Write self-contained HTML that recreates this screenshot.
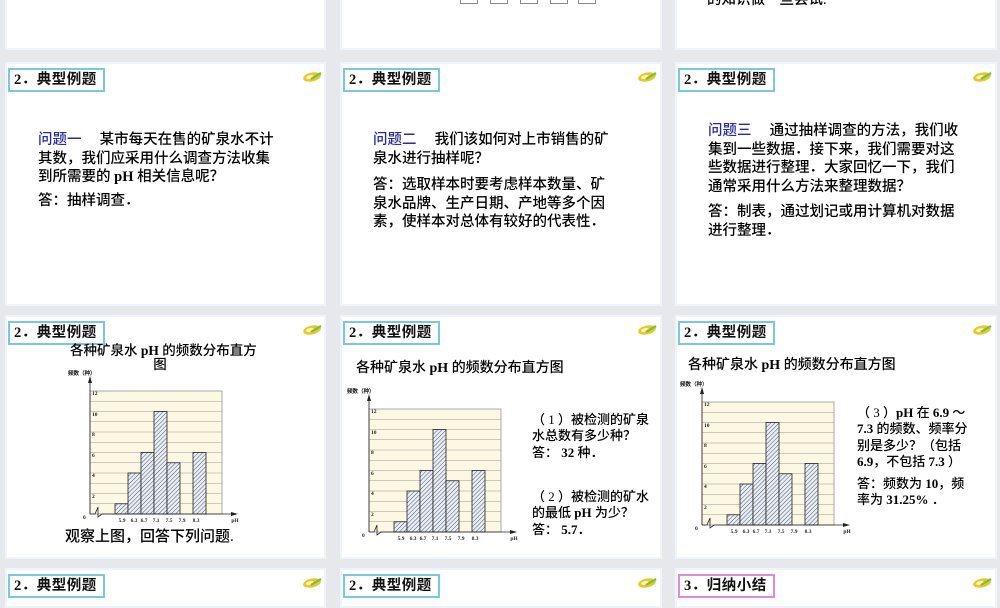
<!DOCTYPE html>
<html><head><meta charset="utf-8">
<style>
*{margin:0;padding:0;box-sizing:border-box}
body{width:1000px;height:600px;overflow:hidden;background:#e7e8ec;position:relative;font-family:"Liberation Serif","Noto Sans CJK SC",sans-serif;}
.s{position:absolute;background:#fff;border:2px solid #edf4fb;}
.t{position:absolute;border:2px solid #78c8e0;font-size:14.5px;font-weight:bold;color:#111;padding:0 6px 0 4px;height:24px;line-height:20px;background:#fff;white-space:nowrap;letter-spacing:0.5px}
.t.p{border-color:#e08ad8}
.ic{position:absolute;width:22px;height:12px}
.tx{position:absolute;font-size:14.5px;line-height:18.7px;color:#000;font-weight:500;font-family:"Liberation Serif","Noto Sans CJK SC",sans-serif;white-space:nowrap}
.b{color:#2a2aa0}
.q{position:absolute;font-size:13px;line-height:16.3px;color:#000;font-weight:500;white-space:nowrap}
.ch{position:absolute}
</style></head><body>

<div class="s" style="left:5px;top:-10px;width:321px;height:60px"></div>
<div class="s" style="left:340px;top:-10px;width:322px;height:60px">
  <div style="position:absolute;left:118px;top:8px;width:18px;height:4px;border:1px solid #888;border-top:none"></div>
  <div style="position:absolute;left:148px;top:8px;width:18px;height:4px;border:1px solid #888;border-top:none"></div>
  <div style="position:absolute;left:178px;top:8px;width:18px;height:4px;border:1px solid #888;border-top:none"></div>
  <div style="position:absolute;left:208px;top:8px;width:18px;height:4px;border:1px solid #888;border-top:none"></div>
  <div style="position:absolute;left:236px;top:8px;width:18px;height:4px;border:1px solid #888;border-top:none"></div>
</div>
<div class="s" style="left:675px;top:-10px;width:322px;height:60px">
  <div class="tx" style="left:30px;top:-1px">的知识做一些尝试.</div>
</div>

<div class="s" style="left:5px;top:62px;width:321px;height:244px"></div>
<div class="s" style="left:340px;top:62px;width:322px;height:244px"></div>
<div class="s" style="left:675px;top:62px;width:322px;height:244px"></div>

<div class="s" style="left:5px;top:315px;width:321px;height:244px"></div>
<div class="s" style="left:340px;top:315px;width:322px;height:244px"></div>
<div class="s" style="left:675px;top:315px;width:322px;height:244px"></div>

<div class="s" style="left:5px;top:568px;width:321px;height:40px"></div>
<div class="s" style="left:340px;top:568px;width:322px;height:40px"></div>
<div class="s" style="left:675px;top:568px;width:322px;height:40px"></div>

<div class="t" style="left:8px;top:68px">2．典型例题</div>
<div class="t" style="left:343px;top:68px">2．典型例题</div>
<div class="t" style="left:678px;top:68px">2．典型例题</div>
<div class="t" style="left:8px;top:321px">2．典型例题</div>
<div class="t" style="left:343px;top:321px">2．典型例题</div>
<div class="t" style="left:678px;top:321px">2．典型例题</div>
<div class="t" style="left:8px;top:574px">2．典型例题</div>
<div class="t" style="left:343px;top:574px">2．典型例题</div>
<div class="t p" style="left:678px;top:574px">3．归纳小结</div>

<svg width="0" height="0" style="position:absolute"><defs>
<g id="leaf"><ellipse cx="10" cy="6" rx="9" ry="4.5" fill="#e8c830" transform="rotate(-12 10 6)"/><ellipse cx="8" cy="6" rx="4" ry="1.8" fill="#fff6b0" transform="rotate(-12 8 6)"/><path d="M9 8 L19 2" stroke="#7cc040" stroke-width="2.2"/></g>
<pattern id="h" width="3" height="3" patternUnits="userSpaceOnUse" patternTransform="rotate(45)"><rect width="3" height="3" fill="#e8eef8"/><line x1="0" y1="0" x2="0" y2="3" stroke="#444" stroke-width="0.9"/></pattern>
<g id="chart" font-family="Liberation Serif" font-size="5.5" font-weight="bold" fill="#222">
 <text x="3" y="14">频数（种）</text>
 <rect x="25" y="30" width="132" height="123" fill="#fdf8e4" stroke="#888" stroke-width="0.7"/>
 <g stroke="#999" stroke-width="0.6">
 <line x1="25" x2="157" y1="40.25" y2="40.25"/><line x1="25" x2="157" y1="50.5" y2="50.5"/><line x1="25" x2="157" y1="60.75" y2="60.75"/><line x1="25" x2="157" y1="71" y2="71"/><line x1="25" x2="157" y1="81.25" y2="81.25"/><line x1="25" x2="157" y1="91.5" y2="91.5"/><line x1="25" x2="157" y1="101.75" y2="101.75"/><line x1="25" x2="157" y1="112" y2="112"/><line x1="25" x2="157" y1="122.25" y2="122.25"/><line x1="25" x2="157" y1="132.5" y2="132.5"/><line x1="25" x2="157" y1="142.75" y2="142.75"/>
 </g>
 <line x1="25" y1="17" x2="25" y2="153" stroke="#222" stroke-width="0.8"/>
 <path d="M23 22 L25 15 L27 22Z" fill="#222"/>
 <text x="27" y="34">12</text><text x="27" y="55">10</text><text x="27" y="75">8</text><text x="27" y="96">6</text><text x="27" y="116">4</text><text x="27" y="137">2</text>
 <g stroke="#222" stroke-width="0.8" fill="url(#h)">
 <rect x="50" y="142.75" width="13" height="10.25"/>
 <rect x="63" y="112" width="13" height="41"/>
 <rect x="76" y="91.5" width="13" height="61.5"/>
 <rect x="89" y="50.5" width="13" height="102.5"/>
 <rect x="102" y="101.75" width="13" height="51.25"/>
 <rect x="128" y="91.5" width="13" height="61.5"/>
 </g>
 <path d="M25 153 L30 153 L33 146 L33 156 L37 153 L168 153" stroke="#222" stroke-width="0.8" fill="none"/>
 <path d="M166 151 L173 153 L166 155Z" fill="#222"/>
 <text x="18" y="158">0</text>
 <g text-anchor="middle"><text x="57" y="161">5.9</text><text x="69" y="161">6.3</text><text x="79" y="161">6.7</text><text x="91" y="161">7.1</text><text x="104" y="161">7.5</text><text x="117" y="161">7.9</text><text x="131" y="161">8.3</text><text x="170" y="161">pH</text></g>
</g>
</defs></svg>
<svg class="ic" style="left:302px;top:71px" viewBox="0 0 22 12"><use href="#leaf"/></svg>
<svg class="ic" style="left:637px;top:71px" viewBox="0 0 22 12"><use href="#leaf"/></svg>
<svg class="ic" style="left:972px;top:71px" viewBox="0 0 22 12"><use href="#leaf"/></svg>
<svg class="ic" style="left:302px;top:324px" viewBox="0 0 22 12"><use href="#leaf"/></svg>
<svg class="ic" style="left:637px;top:324px" viewBox="0 0 22 12"><use href="#leaf"/></svg>
<svg class="ic" style="left:972px;top:324px" viewBox="0 0 22 12"><use href="#leaf"/></svg>
<svg class="ic" style="left:302px;top:577px" viewBox="0 0 22 12"><use href="#leaf"/></svg>
<svg class="ic" style="left:637px;top:577px" viewBox="0 0 22 12"><use href="#leaf"/></svg>
<svg class="ic" style="left:972px;top:577px" viewBox="0 0 22 12"><use href="#leaf"/></svg>

<div class="tx" style="left:38px;top:131px"><span class="b">问题一</span>　 某市每天在售的矿泉水不计<br>其数，我们应采用什么调查方法收集<br>到所需要的 <b>pH</b> 相关信息呢？</div>
<div class="tx" style="left:38px;top:192px">答：抽样调查．</div>

<div class="tx" style="left:373px;top:131px"><span class="b">问题二</span>　 我们该如何对上市销售的矿<br>泉水进行抽样呢？</div>
<div class="tx" style="left:373px;top:176px">答：选取样本时要考虑样本数量、矿<br>泉水品牌、生产日期、产地等多个因<br>素，使样本对总体有较好的代表性．</div>

<div class="tx" style="left:708px;top:122px"><span class="b">问题三</span>　 通过抽样调查的方法，我们收<br>集到一些数据．接下来，我们需要对这<br>些数据进行整理．大家回忆一下，我们<br>通常采用什么方法来整理数据？</div>
<div class="tx" style="left:708px;top:203px">答：制表，通过划记或用计算机对数据<br>进行整理．</div>

<div class="q" style="left:70px;top:344px;font-size:13.5px;line-height:14px;text-align:center;width:180px">各种矿泉水 <b>pH</b> 的频数分布直方<br>图</div>
<svg class="ch" style="left:65px;top:361px" width="185" height="165" viewBox="0 0 185 165"><use href="#chart"/></svg>
<div class="tx" style="left:65px;top:528px;font-size:15px">观察上图，回答下列问题.</div>

<div class="q" style="left:356px;top:361px;font-size:14px">各种矿泉水 <b>pH</b> 的频数分布直方图</div>
<svg class="ch" style="left:344px;top:379px" width="185" height="165" viewBox="0 0 185 165"><use href="#chart"/></svg>
<div class="q" style="left:532px;top:412px">（ 1 ）被检测的矿泉<br>水总数有多少种？<br>答：  <b>32</b> 种．</div>
<div class="q" style="left:532px;top:489px">（ 2 ）被检测的矿水<br>的最低 <b>pH</b> 为少？<br>答：  <b>5.7</b>．</div>

<div class="q" style="left:688px;top:358px;font-size:14px">各种矿泉水 <b>pH</b> 的频数分布直方图</div>
<svg class="ch" style="left:677px;top:372px" width="185" height="165" viewBox="0 0 185 165"><use href="#chart"/></svg>
<div class="q" style="left:857px;top:405px">（ 3 ）<b>pH</b> 在 <b>6.9</b> ～<br><b>7.3</b> 的频数、频率分<br>别是多少？（包括<br><b>6.9</b>，不包括 <b>7.3</b> ）</div>
<div class="q" style="left:857px;top:476px">答：频数为 <b>10</b>，频<br>率为 <b>31.25%</b> ．</div>

</body></html>
